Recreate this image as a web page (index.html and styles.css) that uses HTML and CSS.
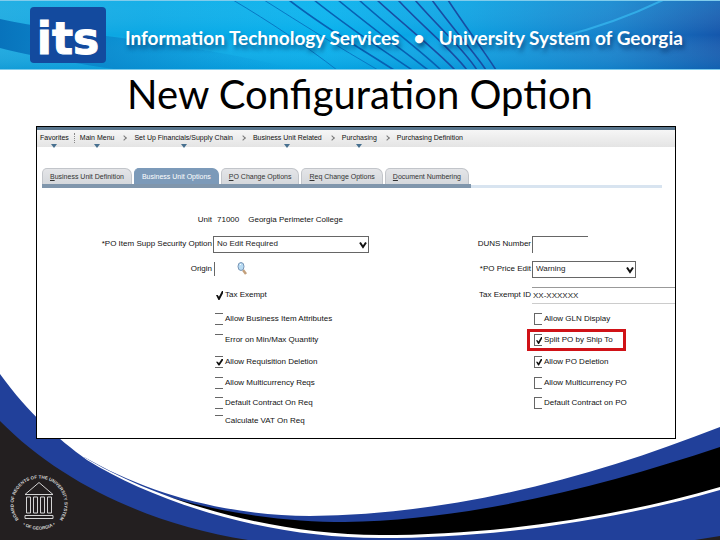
FILE: index.html
```html
<!DOCTYPE html>
<html lang="en">
<head>
<meta charset="utf-8">
<title>New Configuration Option</title>
<link rel="stylesheet" href="styles.css">
</head>
<body>
<svg class="waves" viewBox="0 0 720 180" preserveAspectRatio="none" aria-hidden="true">
  <path fill="#21409a" d="M84 97C145 132 220 155 310 156C450 155 590 118 720 67V175H84Z"/>
  <path fill="#000" d="M165 136C230 155 290 162 345 162C470 160 600 127 720 87V175H165Z"/>
  <path fill="#fff" d="M84 97C150 137 265 175 380 175C490 175 610 159 720 127V180H84Z"/>
  <path fill="#21409a" d="M0 14C29 54 57 78 87 100C155 142 265 178 380 178C490 178 610 162 720 130V180H0Z"/>
  <path fill="#231f20" d="M0 61C60 122 150 165 248 180H0ZM695 180L720 176V180Z"/>
</svg>

<header class="banner">
  <svg class="banner-art" viewBox="0 0 720 70" preserveAspectRatio="none" aria-hidden="true">
    <defs>
      <linearGradient id="sky" x1="0" x2="1">
        <stop offset="0" stop-color="#17a7df"/>
        <stop offset=".2" stop-color="#08a7e4"/>
        <stop offset=".45" stop-color="#04b0ed"/>
        <stop offset=".65" stop-color="#0a9ee0"/>
        <stop offset=".85" stop-color="#1580cb"/>
        <stop offset="1" stop-color="#1457ac"/>
      </linearGradient>
      <linearGradient id="shade" x1="0" x2="0" y1="0" y2="1">
        <stop offset="0" stop-color="#4fd0f5" stop-opacity=".2"/>
        <stop offset=".5" stop-color="#fff" stop-opacity="0"/>
        <stop offset="1" stop-color="#0078bd" stop-opacity=".25"/>
      </linearGradient>
      <linearGradient id="band" x1="0" x2="1">
        <stop offset="0" stop-color="#0873bc"/>
        <stop offset="1" stop-color="#0893d8" stop-opacity="0"/>
      </linearGradient>
    </defs>
    <rect width="720" height="70" fill="url(#sky)"/>
    <rect width="720" height="70" fill="url(#shade)"/>
    <path fill="url(#band)" d="M0 19C80 36 190 42 300 70H120C80 64 30 56 0 48Z"/>
    <g fill="none" stroke="#0878c4" stroke-width="1">
      <path d="M233 0C270 22 306 46 337 70"/>
      <path d="M264 0C302 24 340 48 378 70"/>
    </g>
    <g fill="none" stroke="#0760b3" stroke-width="1.6">
      <path d="M289 0C325 28 363 50 394 70"/>
      <path d="M314 0C350 29 384 51 412 70"/>
      <path d="M338 0C374 30 404 51 428 70"/>
      <path d="M359 0C390 28 420 50 441 70"/>
    </g>
    <g fill="none" stroke="#174da4" stroke-width="1.6">
      <path d="M377 0C405 26 434 48 455 70"/>
      <path d="M398 0C424 28 450 48 467 70"/>
      <path d="M415 0C440 29 463 48 477 70"/>
      <path d="M432 0C453 29 471 48 486 70"/>
      <path d="M448 0C467 29 482 48 496 70"/>
    </g>
    <path d="M663 0C630 16 600 27 560 37" fill="none" stroke="#35b5ee" stroke-width="2" opacity=".8"/>
    <path d="M0 .5H720M0 69.500H720" stroke="#80ccec"/>
  </svg>
  <div class="logo">its</div>
  <p class="org"><span>Information Technology Services</span><span>•</span><span>University System of Georgia</span></p>
</header>

<h1>New Configuration Option</h1>

<main class="panel">
  <nav class="crumbs" aria-label="Breadcrumb">
    <a class="menu" href="#">Favorites</a>
    <i class="divider"></i>
    <a class="menu" href="#">Main Menu</a>
    <i class="chevron"></i>
    <a class="menu" href="#">Set Up Financials/Supply Chain</a>
    <i class="chevron"></i>
    <a class="menu" href="#">Business Unit Related</a>
    <i class="chevron"></i>
    <a class="menu" href="#">Purchasing</a>
    <i class="chevron"></i>
    <a href="#">Purchasing Definition</a>
  </nav>

  <div class="tabbar">
    <div class="tabs">
      <button type="button"><u>B</u>usiness Unit Definition</button>
      <button type="button" class="active">Business Unit Options</button>
      <button type="button"><u>P</u>O Change Options</button>
      <button type="button"><u>R</u>eq Change Options</button>
      <button type="button"><u>D</u>ocument Numbering</button>
    </div>
  </div>

  <form class="fields">
    <span class="name">Unit</span>
    <div class="value"><span>71000</span><span>Georgia Perimeter College</span></div>

    <label class="name" for="security">*PO Item Supp Security Option</label>
    <div class="picker wide">
      <select id="security"><option>No Edit Required</option></select>
      <svg viewBox="0 0 8 8" aria-hidden="true"><path d="M1 1.500L4 6L7 1.500"/></svg>
    </div>
    <label class="name" for="duns">DUNS Number</label>
    <input class="duns" id="duns" type="text">

    <label class="name" for="origin">Origin</label>
    <div class="lookup">
      <input id="origin" type="text">
      <button type="button" aria-label="Look up origin">
        <svg viewBox="0 0 10 14" aria-hidden="true"><path d="M6 8L9 12" stroke="#c3a07c" stroke-width="2.500"/><ellipse cx="4" cy="4.500" rx="3" ry="4" fill="#b9dcf4" stroke="#7895b5"/><path d="M3 3L4 2" stroke="#fff"/></svg>
      </button>
    </div>
    <label class="name" for="price">*PO Price Edit</label>
    <div class="picker">
      <select id="price"><option>Warning</option></select>
      <svg viewBox="0 0 8 8" aria-hidden="true"><path d="M1 1.500L4 6L7 1.500"/></svg>
    </div>

    <label class="check first bare"><input type="checkbox" checked>Tax Exempt</label>
    <label class="name" for="taxid">Tax Exempt ID</label>
    <input class="taxid" id="taxid" type="text" value="XX-XXXXXX">

    <label class="check first"><input type="checkbox">Allow Business Item Attributes</label>
    <label class="check second"><input type="checkbox">Allow GLN Display</label>
    <label class="check first open"><input type="checkbox">Error on Min/Max Quantity</label>
    <label class="check second marked"><input type="checkbox" checked>Split PO by Ship To</label>
    <label class="check first"><input type="checkbox" checked>Allow Requisition Deletion</label>
    <label class="check second"><input type="checkbox" checked>Allow PO Deletion</label>
    <label class="check first"><input type="checkbox">Allow Multicurrency Reqs</label>
    <label class="check second"><input type="checkbox">Allow Multicurrency PO</label>
    <label class="check first"><input type="checkbox">Default Contract On Req</label>
    <label class="check second"><input type="checkbox">Default Contract on PO</label>
    <label class="check first open"><input type="checkbox">Calculate VAT On Req</label>
  </form>
</main>

<svg class="seal" viewBox="0 0 120 120" role="img" aria-label="Board of Regents of the University System of Georgia">
  <defs>
    <path id="ring-top" d="M24 96A51 51 0 1 1 96 96"/>
    <path id="ring-bottom" d="M20 95A57 57 0 0 0 100 95"/>
  </defs>
  <text><textPath href="#ring-top" startOffset="50%">BOARD OF REGENTS OF THE UNIVERSITY SYSTEM</textPath></text>
  <text><textPath href="#ring-bottom" startOffset="50%">• OF GEORGIA •</textPath></text>
  <g fill="none" stroke="#d4d4d4" stroke-width="2">
    <path d="M32 41L60 17L88 41Z"/>
    <path d="M35 46H43V78H35ZM49 46H57V78H49ZM63 46H71V78H63ZM77 46H85V78H77Z"/>
    <path d="M32 83H88V89H32Z"/>
  </g>
</svg>
</body>
</html>
```
FILE: styles.css
```css
* { box-sizing: border-box; }

body {
  margin: 0;
  min-height: 100vh;
  position: relative;
  display: flex;
  flex-direction: column;
  overflow-x: hidden;
  background: #fff;
  font-family: "Liberation Sans", sans-serif;
  font-size: 8px;
  line-height: 12px;
  color: #111;
}

.waves {
  position: absolute;
  left: 0;
  bottom: 0;
  width: 100%;
  height: 180px;
}

.banner {
  position: relative;
  display: flex;
  align-items: center;
  gap: 19px;
  height: 70px;
  padding: 0 30px;
}

.banner-art {
  position: absolute;
  inset: 0;
  width: 100%;
  height: 100%;
}

.logo {
  position: relative;
  flex: none;
  width: 76px;
  height: 56px;
  border-radius: 4px;
  background: #134a9e;
  color: #fff;
  font: bold 44px/64px "DejaVu Sans", sans-serif;
  text-align: center;
  -webkit-text-stroke: 1px #fff;
}

.org {
  position: relative;
  display: flex;
  gap: 14px;
  margin: 6px 0 0;
  color: #fff;
  font: bold 19px/24px Lato, sans-serif;
  white-space: nowrap;
  text-shadow: 2px 4px 4px rgba(0, 40, 90, .6);
}

h1 {
  margin: 0;
  color: #000;
  font: 40px/48px Lato, sans-serif;
  text-align: center;
}

.panel {
  position: relative;
  margin: 8px 44px 0 36px;
  padding-bottom: 7px;
  border: 1px solid #000;
  background: #fff;
}

.crumbs {
  display: flex;
  align-items: center;
  gap: 8px;
  height: 20px;
  padding: 0 3px 2px;
  border-top: 3px solid #58758d;
  background: linear-gradient(#f6f6f6, #e4e4e4);
  font-size: 7px;
  white-space: nowrap;
}

.crumbs a {
  position: relative;
  color: #111;
  text-decoration: none;
}

.menu::after {
  content: "";
  position: absolute;
  left: 50%;
  top: 12px;
  margin-left: -3px;
  border: 3px solid transparent;
  border-top: 4px solid #47708f;
  border-bottom: 0;
}

.divider {
  height: 10px;
  margin: 0 -3px;
  border-left: 1px dotted #888;
}

.chevron {
  width: 4px;
  height: 4px;
  border: solid #777;
  border-width: 1px 1px 0 0;
  transform: rotate(45deg);
}

.tabbar {
  display: flex;
  margin: 21px 13px 0 5px;
  border-bottom: 3px solid #d8e4f0;
}

.tabs {
  display: flex;
  gap: 2px;
  margin-bottom: -3px;
  padding-right: 2px;
  border-bottom: 4px solid #8096ac;
}

.tabs button {
  height: 16px;
  padding: 0 7px;
  border: 1px solid #c2c5ca;
  border-bottom: 0;
  border-radius: 5px 7px 0 0;
  background: linear-gradient(#e4e5e8, #d5d8dc);
  color: #333;
  font: inherit;
  font-size: 7px;
  line-height: 15px;
  white-space: nowrap;
}

.tabs .active {
  border-color: #7c9ab9;
  background: #7c9ab9;
  color: #fff;
}

.fields {
  display: grid;
  grid-template-columns: minmax(0, 175fr) minmax(0, 257fr) minmax(0, 60fr) minmax(0, 143fr);
  grid-template-rows: 24px 24px 26px 26px 21px 22px 21px 22px 17px 20px;
  column-gap: 1px;
  align-items: center;
  margin-top: 20px;
}

.name {
  justify-self: end;
  white-space: nowrap;
}

.value {
  grid-column: 2 / -1;
  display: flex;
  gap: 9px;
  padding-left: 4px;
}

.fields input[type="text"],
.fields select {
  height: 17px;
  padding: 0 3px;
  border: 1px solid #666;
  border-radius: 0;
  background: #fff;
  color: #222;
  font: inherit;
}

.picker {
  position: relative;
  width: 104px;
}

.picker.wide { width: 156px; }

.picker select {
  display: block;
  width: 100%;
  appearance: none;
}

.picker svg {
  position: absolute;
  right: 2px;
  top: 5px;
  width: 8px;
  height: 8px;
  fill: none;
  stroke: #111;
  stroke-width: 2;
  pointer-events: none;
}

.fields input.duns {
  width: 56px;
  border-width: 1px 0 0 1px;
}

.fields input.taxid {
  width: 100%;
  padding: 0 1px;
  border-width: 1px 0;
  border-color: #999 transparent #ccc;
}

.lookup {
  display: flex;
  align-items: center;
  gap: 7px;
}

.fields .lookup input {
  width: 16px;
  height: 14px;
  margin-left: 1px;
  border-width: 0 0 0 1px;
}

.lookup button {
  width: 10px;
  height: 14px;
  padding: 0;
  border: 0;
  background: none;
}

.lookup svg { display: block; }

.check {
  display: flex;
  align-items: center;
  justify-self: start;
  gap: 2px;
  padding-left: 2px;
  white-space: nowrap;
}

.first { grid-column: 2; }
.second { grid-column: 4; }

.check input {
  position: relative;
  width: 8px;
  height: 12px;
  margin: 0;
  border: solid #666;
  border-width: 1px 0;
  appearance: none;
}

.second input { border-width: 1px 0 1px 1px; }
.open input { border-bottom-width: 0; }
.bare input { border-width: 0; }

.check input:checked::before {
  content: "";
  position: absolute;
  inset: 2px 0 1px 1px;
  background: #111;
  clip-path: polygon(0 45%, 25% 45%, 42% 65%, 85% 0, 100% 0, 100% 25%, 50% 100%, 35% 100%);
}

.marked {
  margin-left: -5px;
  padding: 2px 10px 2px 4px;
  border: 3px solid #d01217;
}

.seal {
  position: absolute;
  left: 9px;
  bottom: 6px;
  width: 60px;
  height: 60px;
}

.seal text {
  fill: #d4d4d4;
  font: bold 9px "Liberation Sans", sans-serif;
  text-anchor: middle;
}
```
